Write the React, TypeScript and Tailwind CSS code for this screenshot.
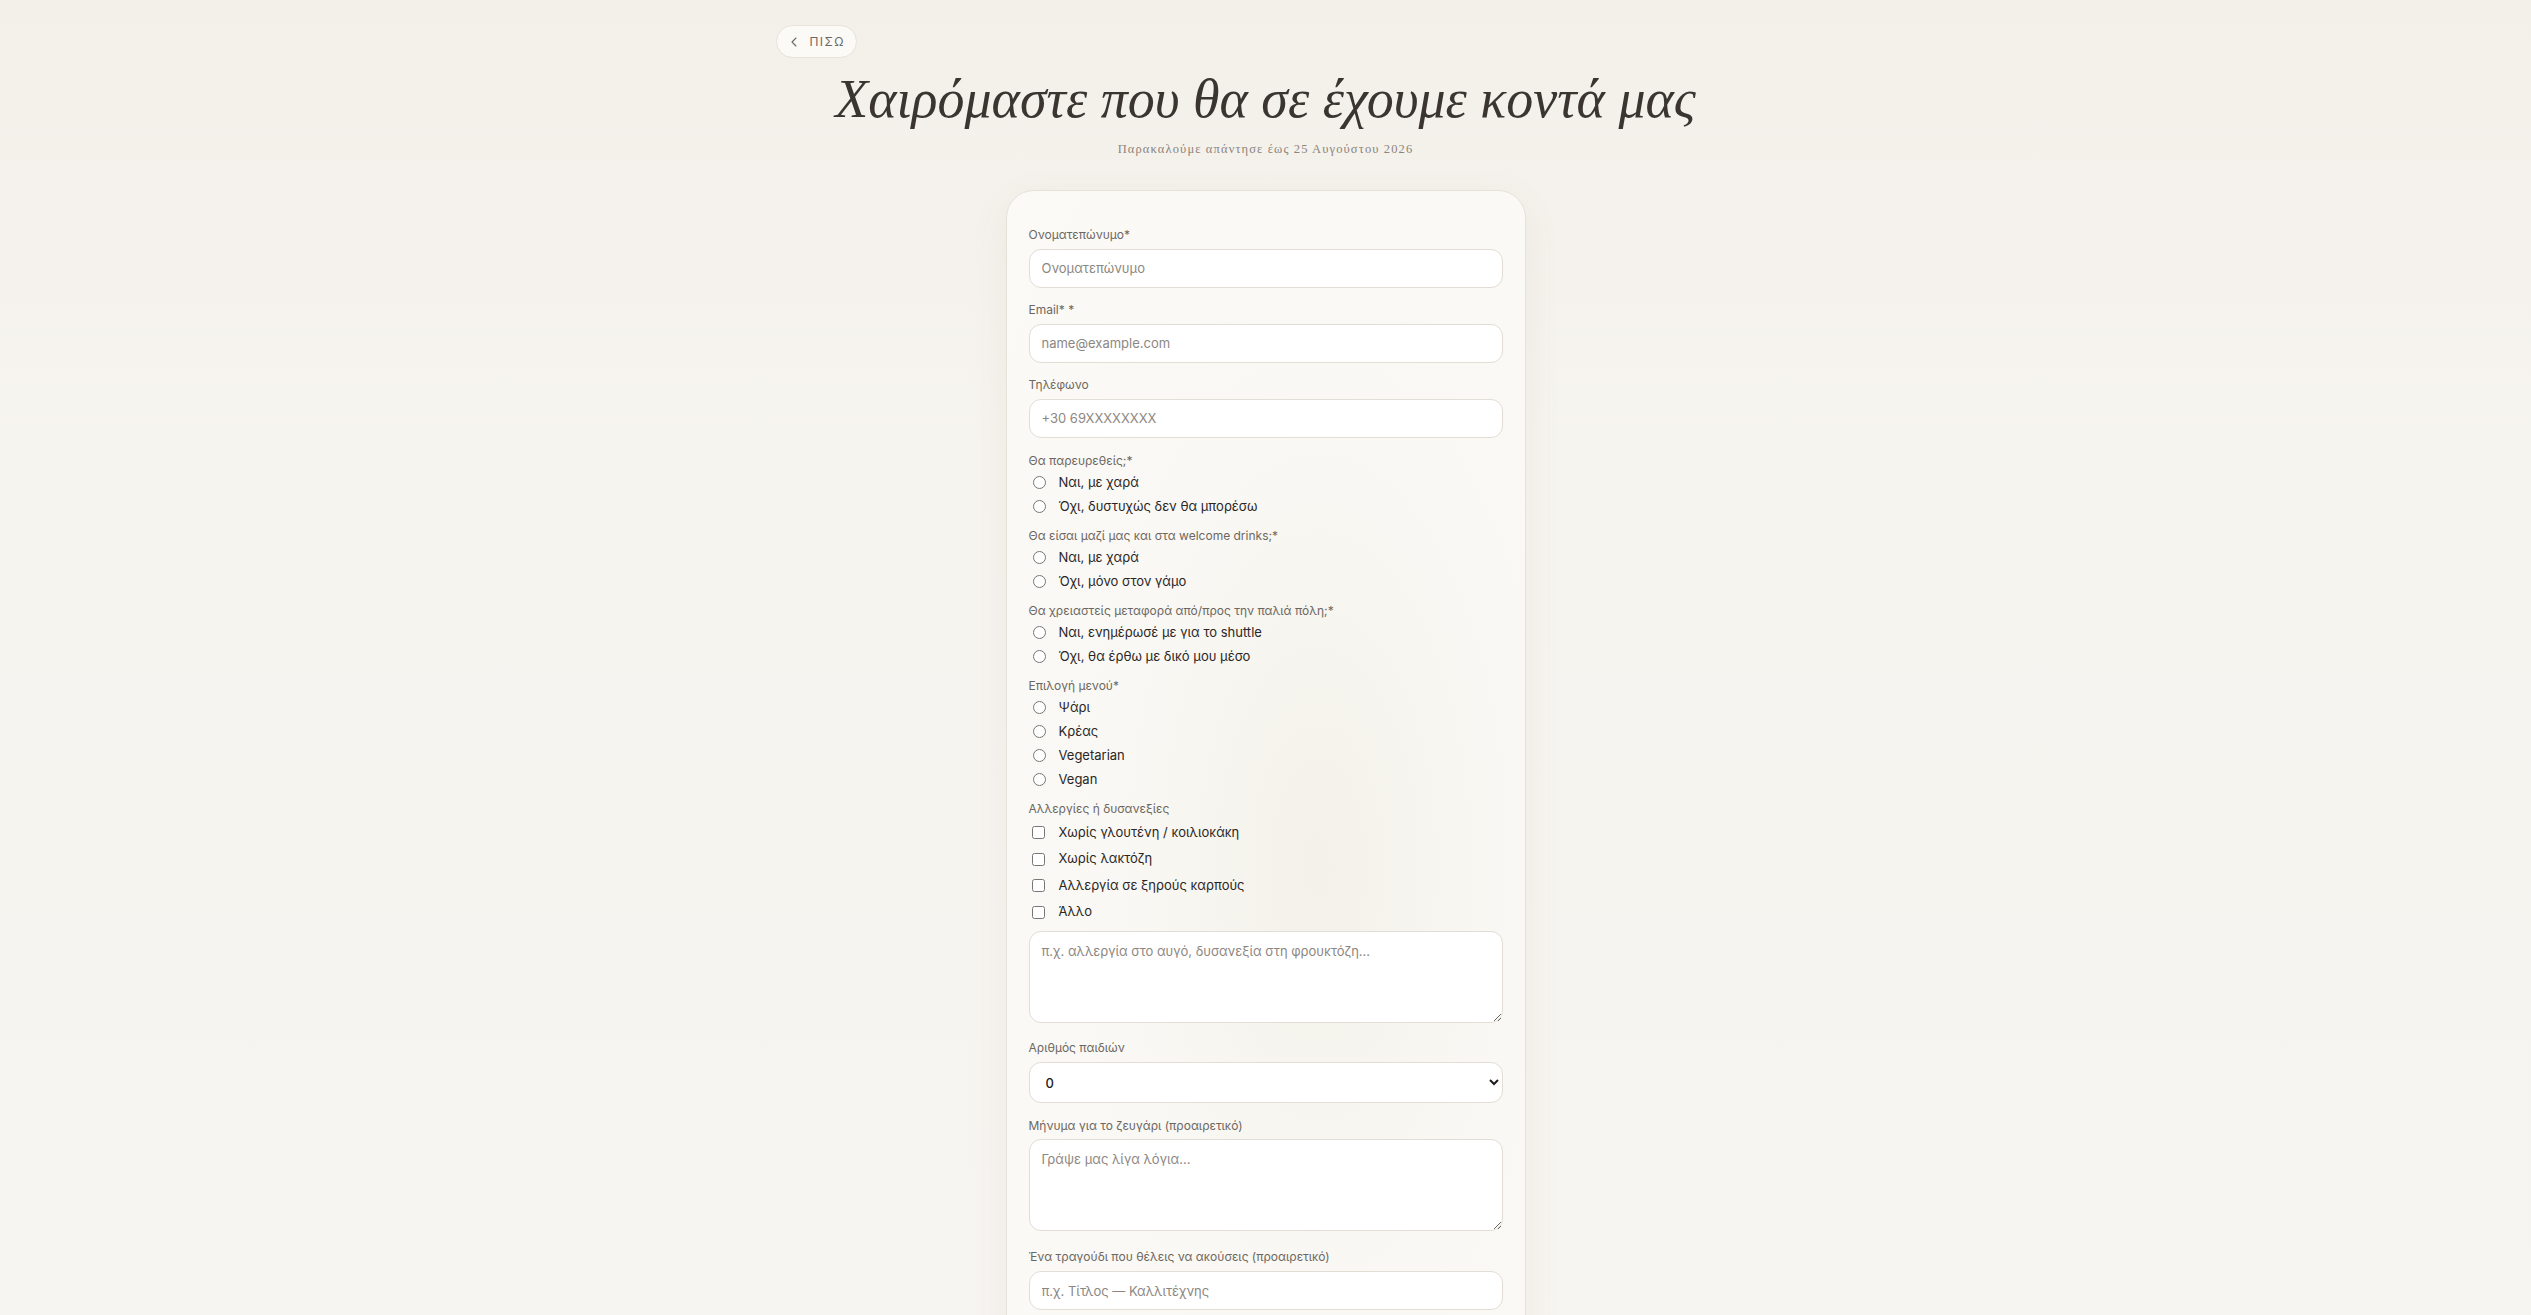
import { ChevronLeft } from "lucide-react";

type Option = { label: string };

const labelCls = "block text-[12px] leading-4 text-[#6d6761]";
const inputCls =
  "block w-full h-[39px] rounded-[12px] border border-[#e2ddd5] bg-white px-3 text-[13px] text-[#2f2b28] placeholder:text-[#8d8781] outline-none";
const textareaCls =
  "block w-full h-[92px] rounded-[12px] border border-[#e2ddd5] bg-white px-3 py-2.5 text-[13px] text-[#2f2b28] placeholder:text-[#8d8781] outline-none";

function TextField({ label, placeholder, type = "text" }: { label: string; placeholder: string; type?: string }) {
  return (
    <div className="mb-[14px]">
      <label className={labelCls}>{label}</label>
      <input type={type} placeholder={placeholder} className={`${inputCls} mt-1.5`} />
    </div>
  );
}

function RadioGroup({ name, label, options }: { name: string; label: string; options: Option[] }) {
  return (
    <fieldset className="mb-[9px]">
      <legend className={labelCls}>{label}</legend>
      <div className="mt-0.5">
        {options.map((o) => (
          <label key={o.label} className="flex h-6 items-center text-[13px] text-[#2a2624]">
            <input type="radio" name={name} className="ml-[4px] mr-[13px] h-[13px] w-[13px]" />
            {o.label}
          </label>
        ))}
      </div>
    </fieldset>
  );
}

const allergies = ["Χωρίς γλουτένη / κοιλιοκάκη", "Χωρίς λακτόζη", "Αλλεργία σε ξηρούς καρπούς", "Άλλο"];

export default function App() {
  return (
    <div
      className="min-h-screen bg-[#f6f3ee] bg-[linear-gradient(180deg,#f3f0ea_0%,#f6f4ef_30%,#f7f5f1_100%)] pb-16"
      style={{ fontFamily: "Inter, 'Noto Sans', sans-serif" }}
    >
      <div className="mx-auto max-w-5xl px-6 pt-[25px]">
        <button className="-ml-[2px] flex h-[33px] items-center gap-2 rounded-full border border-[#e7e2da] bg-[#fbfaf7] pl-[9px] pr-[11px] text-[12px] tracking-[0.12em] text-[#6e6862]">
          <ChevronLeft size={16} strokeWidth={1.6} />
          ΠΙΣΩ
        </button>

        <h1
          className="mt-[9px] text-center text-[54px] leading-[1.2] italic text-[#3a3531]"
          style={{ fontFamily: "'Liberation Serif', 'DejaVu Serif', serif" }}
        >
          Χαιρόμαστε που θα σε έχουμε κοντά μας
        </h1>
        <p
          className="mt-[9px] text-center text-[12.5px] leading-4 tracking-[0.09em] text-[#8c847b]"
          style={{ fontFamily: "'Liberation Serif', 'DejaVu Serif', serif" }}
        >
          Παρακαλούμε απάντησε έως 25 Αυγούστου 2026
        </p>

        <form
          className="mx-auto mt-[33px] w-[520px] rounded-[28px] border border-[#e6e1d9] bg-[#faf9f5] bg-[radial-gradient(ellipse_at_60%_55%,#f3f1e9_0%,#f9f8f4_45%,#fbfaf7_100%)] px-[22px] pt-[36px] pb-8 shadow-[0_12px_40px_rgba(110,95,75,0.07)]"
        >
          <TextField label="Ονοματεπώνυμο*" placeholder="Ονοματεπώνυμο" />
          <TextField label="Email* *" placeholder="name@example.com" type="email" />
          <div className="mb-[15px]">
            <label className={labelCls}>Τηλέφωνο</label>
            <input type="tel" placeholder="+30 69XXXXXXXX" className={`${inputCls} mt-1.5`} />
          </div>

          <RadioGroup
            name="attend"
            label="Θα παρευρεθείς;*"
            options={[{ label: "Ναι, με χαρά" }, { label: "Όχι, δυστυχώς δεν θα μπορέσω" }]}
          />
          <RadioGroup
            name="drinks"
            label="Θα είσαι μαζί μας και στα welcome drinks;*"
            options={[{ label: "Ναι, με χαρά" }, { label: "Όχι, μόνο στον γάμο" }]}
          />
          <RadioGroup
            name="shuttle"
            label="Θα χρειαστείς μεταφορά από/προς την παλιά πόλη;*"
            options={[{ label: "Ναι, ενημέρωσέ με για το shuttle" }, { label: "Όχι, θα έρθω με δικό μου μέσο" }]}
          />
          <RadioGroup
            name="menu"
            label="Επιλογή μενού*"
            options={[{ label: "Ψάρι" }, { label: "Κρέας" }, { label: "Vegetarian" }, { label: "Vegan" }]}
          />

          <fieldset className="mb-[17px]">
            <legend className={labelCls}>Αλλεργίες ή δυσανεξίες</legend>
            <div className="mt-[2.5px]">
              {allergies.map((a) => (
                <label key={a} className="flex h-[26.5px] items-center text-[13px] text-[#2a2624]">
                  <input type="checkbox" className="ml-[3px] mr-[14px] h-[13px] w-[13px]" />
                  {a}
                </label>
              ))}
            </div>
            <textarea
              placeholder="π.χ. αλλεργία στο αυγό, δυσανεξία στη φρουκτόζη..."
              className={`${textareaCls} mt-[6px]`}
            />
          </fieldset>

          <div className="mb-[15px]">
            <label className={labelCls}>Αριθμός παιδιών</label>
            <select className="mt-1.5 block h-[41px] w-full rounded-[12px] border border-[#e2ddd5] bg-white px-3 text-[13px] font-medium text-[#1f1c1a] outline-none">
              <option>0</option>
              <option>1</option>
              <option>2</option>
              <option>3</option>
            </select>
          </div>

          <div className="mb-[18px]">
            <label className={labelCls}>Μήνυμα για το ζευγάρι (προαιρετικό)</label>
            <textarea placeholder="Γράψε μας λίγα λόγια..." className={`${textareaCls} mt-[5px]`} />
          </div>

          <TextField label="Ένα τραγούδι που θέλεις να ακούσεις (προαιρετικό)" placeholder="π.χ. Τίτλος — Καλλιτέχνης" />

          <button
            type="button"
            className="mt-4 h-11 w-full rounded-full bg-[#3a3531] text-[13px] tracking-[0.12em] text-white"
          >
            ΑΠΟΣΤΟΛΗ
          </button>
        </form>
      </div>
    </div>
  );
}
